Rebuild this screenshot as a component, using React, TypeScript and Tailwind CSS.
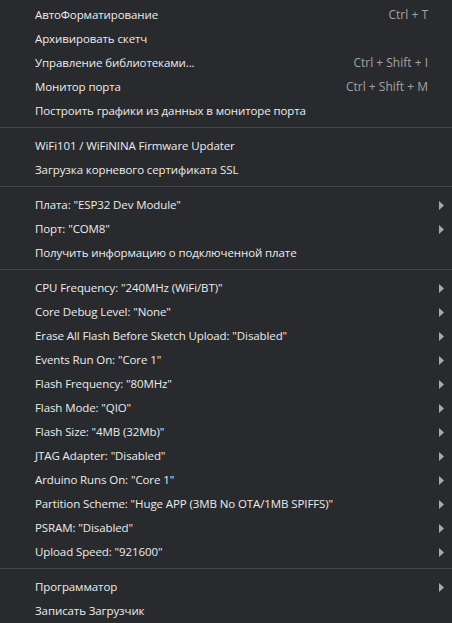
import React from 'react';

type Item = {
  label: string;
  shortcut?: string;
  submenu?: boolean;
};

const groups: Item[][] = [
  [
    { label: 'АвтоФорматирование', shortcut: 'Ctrl + T' },
    { label: 'Архивировать скетч' },
    { label: 'Управление библиотеками...', shortcut: 'Ctrl + Shift + I' },
    { label: 'Монитор порта', shortcut: 'Ctrl + Shift + M' },
    { label: 'Построить графики из данных в мониторе порта' },
  ],
  [
    { label: 'WiFi101 / WiFiNINA Firmware Updater' },
    { label: 'Загрузка корневого сертификата SSL' },
  ],
  [
    { label: 'Плата: "ESP32 Dev Module"', submenu: true },
    { label: 'Порт: "COM8"', submenu: true },
    { label: 'Получить информацию о подключенной плате' },
  ],
  [
    { label: 'CPU Frequency: "240MHz (WiFi/BT)"', submenu: true },
    { label: 'Core Debug Level: "None"', submenu: true },
    { label: 'Erase All Flash Before Sketch Upload: "Disabled"', submenu: true },
    { label: 'Events Run On: "Core 1"', submenu: true },
    { label: 'Flash Frequency: "80MHz"', submenu: true },
    { label: 'Flash Mode: "QIO"', submenu: true },
    { label: 'Flash Size: "4MB (32Mb)"', submenu: true },
    { label: 'JTAG Adapter: "Disabled"', submenu: true },
    { label: 'Arduino Runs On: "Core 1"', submenu: true },
    { label: 'Partition Scheme: "Huge APP (3MB No OTA/1MB SPIFFS)"', submenu: true },
    { label: 'PSRAM: "Disabled"', submenu: true },
    { label: 'Upload Speed: "921600"', submenu: true },
  ],
  [
    { label: 'Программатор', submenu: true },
    { label: 'Записать Загрузчик' },
  ],
];

function MenuRow({ item }: { item: Item }) {
  return (
    <div className="flex h-6 items-center pl-[35px] pr-[8px] text-[11.5px] tracking-[-0.1px] text-[#ececec]">
      <span className="flex-1 whitespace-nowrap">{item.label}</span>
      {item.shortcut && (
        <span className="whitespace-nowrap text-[12px] tracking-normal text-[#a3a3a3]">
          {item.shortcut}
        </span>
      )}
      <span className="ml-[11px] flex w-[5px] items-center">
        {item.submenu && (
          <svg width="5" height="9" viewBox="0 0 5 9">
            <path d="M0 0 L5 4.5 L0 9 Z" fill="#a9a9a9" />
          </svg>
        )}
      </span>
    </div>
  );
}

export default function App() {
  return (
    <div
      className="h-[623px] w-[452px] overflow-hidden bg-[#292a2e] pt-[3px]"
      style={{ fontFamily: '"Open Sans", "Noto Sans", sans-serif' }}
    >
      {groups.map((group, i) => (
        <div key={i}>
          {i > 0 && <div className="mb-[6px] mt-[4px] h-px bg-[#45464b]" />}
          {group.map((item) => (
            <MenuRow key={item.label} item={item} />
          ))}
        </div>
      ))}
    </div>
  );
}
